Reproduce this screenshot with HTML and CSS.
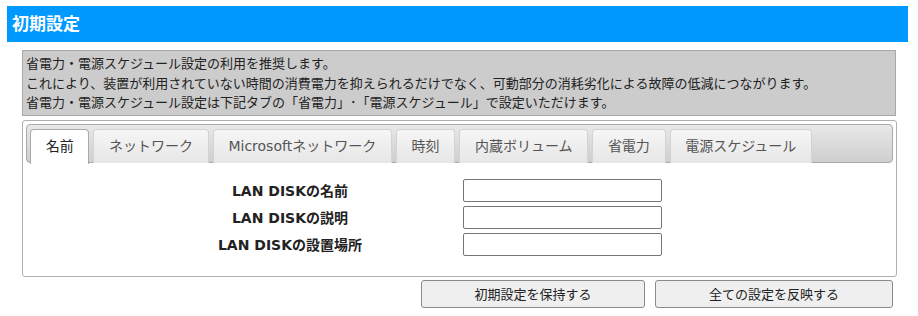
FILE: index.html
```html
<!DOCTYPE html>
<html lang="ja">
<head>
<meta charset="UTF-8">
<title>初期設定</title>
<link rel="stylesheet" href="styles.css">
</head>
<body>

<h1 class="title">初期設定</h1>

<div class="content">
  <div class="notice">
    省電力・電源スケジュール設定の利用を推奨します。<br>
    これにより、装置が利用されていない時間の消費電力を抑えられるだけでなく、可動部分の消耗劣化による故障の低減につながります。<br>
    省電力・電源スケジュール設定は下記タブの「省電力」･「電源スケジュール」で設定いただけます。
  </div>

  <div class="tabs">
    <ul class="tab-bar">
      <li class="tab active">名前</li>
      <li class="tab">ネットワーク</li>
      <li class="tab">Microsoftネットワーク</li>
      <li class="tab">時刻</li>
      <li class="tab">内蔵ボリューム</li>
      <li class="tab">省電力</li>
      <li class="tab">電源スケジュール</li>
    </ul>
    <div class="tab-panel">
      <div class="form-row">
        <label for="name">LAN DISKの名前</label>
        <input type="text" id="name">
      </div>
      <div class="form-row">
        <label for="desc">LAN DISKの説明</label>
        <input type="text" id="desc">
      </div>
      <div class="form-row">
        <label for="place">LAN DISKの設置場所</label>
        <input type="text" id="place">
      </div>
    </div>
  </div>

  <div class="actions">
    <button class="btn keep">初期設定を保持する</button>
    <button class="btn apply">全ての設定を反映する</button>
  </div>
</div>

</body>
</html>
```

FILE: styles.css
```css
body {
  margin: 6px 10px 0 7px;
  font-family: "DejaVu Sans", "Noto Sans CJK JP", sans-serif;
  font-size: 13px;
  color: #222;
  background-color: #fff;
}
.title {
  margin: 0;
  height: 36px;
  line-height: 36px;
  padding-left: 5px;
  background-color: #0099ff;
  color: #fff;
  font-size: 17px;
  font-weight: bold;
}
.content {
  margin: 8px 11px 0 15px;
}
.notice {
  margin-right: 1px;
  background-color: #cccccc;
  border: 1px solid #a8a8a8;
  padding: 3px 0 2px 3px;
  line-height: 19.5px;
}
.tabs {
  margin-top: 4px;
  border: 1px solid #b0b0b0;
  border-radius: 3px;
  padding: 3px;
  background-color: #fff;
}
.tab-bar {
  list-style: none;
  margin: 0;
  padding: 4px 0 0 3px;
  display: flex;
  gap: 4px;
  height: 33px;
  border: 1px solid #aaa;
  border-radius: 4px;
  background: linear-gradient(#e8e8e8, #cfcfcf);
}
.tab {
  padding: 0 14.7px;
  line-height: 33px;
  height: 33px;
  font-size: 14px;
  color: #555;
  border: 1px solid #d3d3d3;
  border-bottom: none;
  border-radius: 4px 4px 0 0;
  background: linear-gradient(#f6f6f6, #e6e6e6);
}
.tab.active {
  color: #222;
  background: #fff;
  border-color: #aaa;
  height: 34px;
  position: relative;
  z-index: 1;
}
.tab-panel {
  padding: 14px 0 15px;
}
.form-row {
  display: flex;
  align-items: center;
  height: 27px;
}
.form-row label {
  width: 330px;
  margin-left: 99px;
  text-align: center;
  font-size: 14px;
  font-weight: bold;
  color: #222;
}
.form-row input {
  margin-left: 8px;
  width: 199px;
  height: 23px;
  box-sizing: border-box;
  border: 1px solid #767676;
  border-radius: 2px;
  padding: 2px 4px;
}
.actions {
  display: flex;
  justify-content: flex-end;
  gap: 10px;
  margin: 3px 4px 0 0;
}
.btn {
  height: 28px;
  font-family: "DejaVu Sans", "Noto Sans CJK JP", sans-serif;
  font-size: 13px;
  color: #222;
  background-color: #efefef;
  border: 1px solid #8a8a8a;
  border-radius: 3px;
}
.keep {
  width: 224px;
}
.apply {
  width: 238px;
}
```
